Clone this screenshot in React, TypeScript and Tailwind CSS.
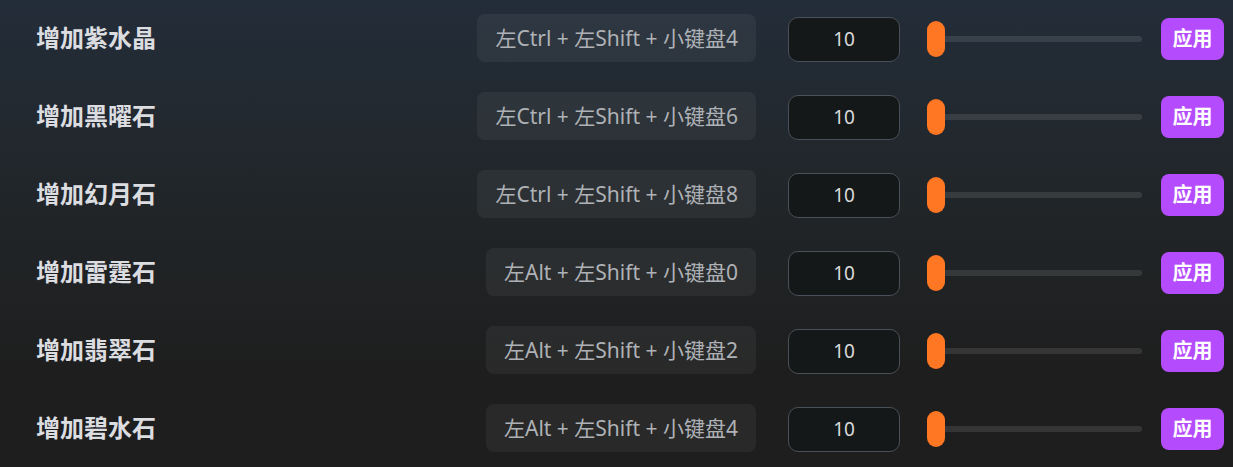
import { useState } from "react";

type Row = { name: string; keys: string };

const rows: Row[] = [
  { name: "增加紫水晶", keys: "左Ctrl + 左Shift + 小键盘4" },
  { name: "增加黑曜石", keys: "左Ctrl + 左Shift + 小键盘6" },
  { name: "增加幻月石", keys: "左Ctrl + 左Shift + 小键盘8" },
  { name: "增加雷霆石", keys: "左Alt + 左Shift + 小键盘0" },
  { name: "增加翡翠石", keys: "左Alt + 左Shift + 小键盘2" },
  { name: "增加碧水石", keys: "左Alt + 左Shift + 小键盘4" },
];

const font = { fontFamily: '"Noto Sans", "Noto Sans CJK SC", sans-serif' };

const ItemRow = ({ row }: { row: Row }) => {
  const [value, setValue] = useState("10");

  return (
    <div className="flex h-[78px] items-center">
      {/* Label */}
      <div className="-mt-[3px] flex-1 text-[24px] leading-none font-bold text-[#dcdde0]">{row.name}</div>

      {/* Hotkey chip */}
      <div className="-mt-[2px] flex h-[48px] items-center rounded-lg bg-white/5 px-[18px] text-[21px] leading-none text-[#aeb2b6]">
        {row.keys}
      </div>

      {/* Amount */}
      <input
        value={value}
        onChange={(e) => setValue(e.target.value)}
        className="ml-8 h-[45px] w-[112px] rounded-[10px] border border-[#4a5057] bg-[#151819] text-center text-[19px] text-[#dadada] outline-none"
        style={font}
      />

      {/* Slider */}
      <div className="relative ml-[27px] flex h-[36px] w-[215px] items-center">
        <div className="h-[6px] w-full rounded-full bg-white/10" />
        <div className="absolute left-0 top-0 h-[36px] w-[18px] rounded-full bg-[#ff7722]" />
      </div>

      {/* Apply */}
      <button className="ml-[19px] flex h-[42px] w-[63px] items-center justify-center rounded-lg bg-[#b44cfe] text-[20px] leading-none font-bold text-white">
        应用
      </button>
    </div>
  );
};

export default function App() {
  return (
    <div
      className="min-h-[467px] w-full bg-[linear-gradient(180deg,#232d39_0%,#212528_45%,#1e1e1e_80%)] pl-9 pr-[9px]"
      style={font}
    >
      {rows.map((r) => (
        <ItemRow key={r.name} row={r} />
      ))}
    </div>
  );
}
